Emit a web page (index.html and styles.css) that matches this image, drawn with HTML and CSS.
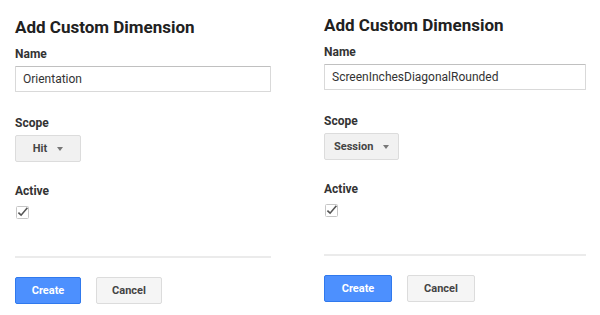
FILE: index.html
```html
<!DOCTYPE html>
<html lang="en">
<head>
    <meta charset="UTF-8">
    <meta name="viewport" content="width=device-width, initial-scale=1.0">
    <title>Add Custom Dimension</title>
    <link rel="stylesheet" href="styles.css">
</head>
<body>
    <div class="panels">
        <div class="dimension-form">
            <h1>Add Custom Dimension</h1>
            <label class="field-label">Name</label>
            <input type="text" class="name-input" value="Orientation">
            <label class="field-label scope-label">Scope</label>
            <div class="scope-select">
                <span>Hit</span>
                <span class="arrow"></span>
            </div>
            <label class="field-label active-label">Active</label>
            <div class="checkbox">
                <svg width="13" height="13" viewBox="0 0 13 13">
                    <rect x="0.5" y="0.5" width="12" height="12" rx="1" fill="#fff" stroke="#c6c6c6"/>
                    <path d="M2.4 6.6 L5.1 9.2 L11.4 1.8" fill="none" stroke="#555" stroke-width="1.6"/>
                </svg>
            </div>
            <div class="divider"></div>
            <div class="actions">
                <button class="btn btn-create">Create</button>
                <button class="btn btn-cancel">Cancel</button>
            </div>
        </div>

        <div class="dimension-form second">
            <h1>Add Custom Dimension</h1>
            <label class="field-label">Name</label>
            <input type="text" class="name-input" value="ScreenInchesDiagonalRounded">
            <label class="field-label scope-label">Scope</label>
            <div class="scope-select">
                <span>Session</span>
                <span class="arrow"></span>
            </div>
            <label class="field-label active-label">Active</label>
            <div class="checkbox">
                <svg width="13" height="13" viewBox="0 0 13 13">
                    <rect x="0.5" y="0.5" width="12" height="12" rx="1" fill="#fff" stroke="#c6c6c6"/>
                    <path d="M2.4 6.6 L5.1 9.2 L11.4 1.8" fill="none" stroke="#555" stroke-width="1.6"/>
                </svg>
            </div>
            <div class="divider"></div>
            <div class="actions">
                <button class="btn btn-create">Create</button>
                <button class="btn btn-cancel">Cancel</button>
            </div>
        </div>
    </div>
</body>
</html>
```
FILE: styles.css
```css
body {
    margin: 0;
    background-color: #fff;
    color: #222;
    font-family: Roboto, Arial, sans-serif;
}
.panels {
    display: flex;
}
.dimension-form {
    display: flex;
    flex-direction: column;
    align-items: flex-start;
    width: 256px;
    margin-left: 15px;
    padding-top: 16px;
}
.dimension-form.second {
    width: 262px;
    margin-left: 53px;
    padding-top: 14px;
}
h1 {
    margin: 0;
    font-size: 17px;
    line-height: 22px;
    font-weight: 700;
    color: #212121;
}
.field-label {
    display: block;
    margin-top: 8px;
    font-size: 12px;
    line-height: 16px;
    font-weight: 700;
    color: #333;
}
.name-input {
    box-sizing: border-box;
    width: 100%;
    height: 26px;
    margin: 4px 0 0;
    padding: 0 7px;
    border: 1px solid #d9d9d9;
    border-top-color: #c0c0c0;
    border-radius: 1px;
    font-family: Roboto, Arial, sans-serif;
    font-size: 12px;
    color: #333;
    outline: none;
}
.scope-label {
    margin-top: 23px;
}
.scope-select {
    box-sizing: border-box;
    display: flex;
    align-items: center;
    justify-content: center;
    gap: 10px;
    min-width: 66px;
    height: 27px;
    margin-top: 4px;
    padding: 0 8px;
    background-color: #f1f1f1;
    border: 1px solid #dcdcdc;
    border-radius: 2px;
    font-size: 11px;
    font-weight: 700;
    color: #444;
}
.second .scope-select {
    padding: 0 9px;
}
.arrow {
    width: 0;
    height: 0;
    margin-top: 1px;
    border-left: 3px solid transparent;
    border-right: 3px solid transparent;
    border-top: 4px solid #777;
}
.active-label {
    margin-top: 21px;
}
.checkbox {
    display: flex;
    margin-top: 7px;
    margin-left: 1px;
}
.divider {
    width: 100%;
    height: 2px;
    margin-top: 37px;
    background-color: #ebebeb;
}
.actions {
    display: flex;
    gap: 15px;
    margin-top: 19px;
}
.btn {
    box-sizing: border-box;
    min-width: 66px;
    height: 27px;
    padding: 0 8px;
    border-radius: 2px;
    font-family: Roboto, Arial, sans-serif;
    font-size: 11px;
    font-weight: 700;
    cursor: pointer;
}
.second .btn {
    min-width: 68px;
}
.btn-create {
    background-color: #4d90fe;
    border: 1px solid #3079ed;
    color: #fff;
}
.btn-cancel {
    background-color: #f5f5f5;
    border: 1px solid #dcdcdc;
    color: #444;
}
```
